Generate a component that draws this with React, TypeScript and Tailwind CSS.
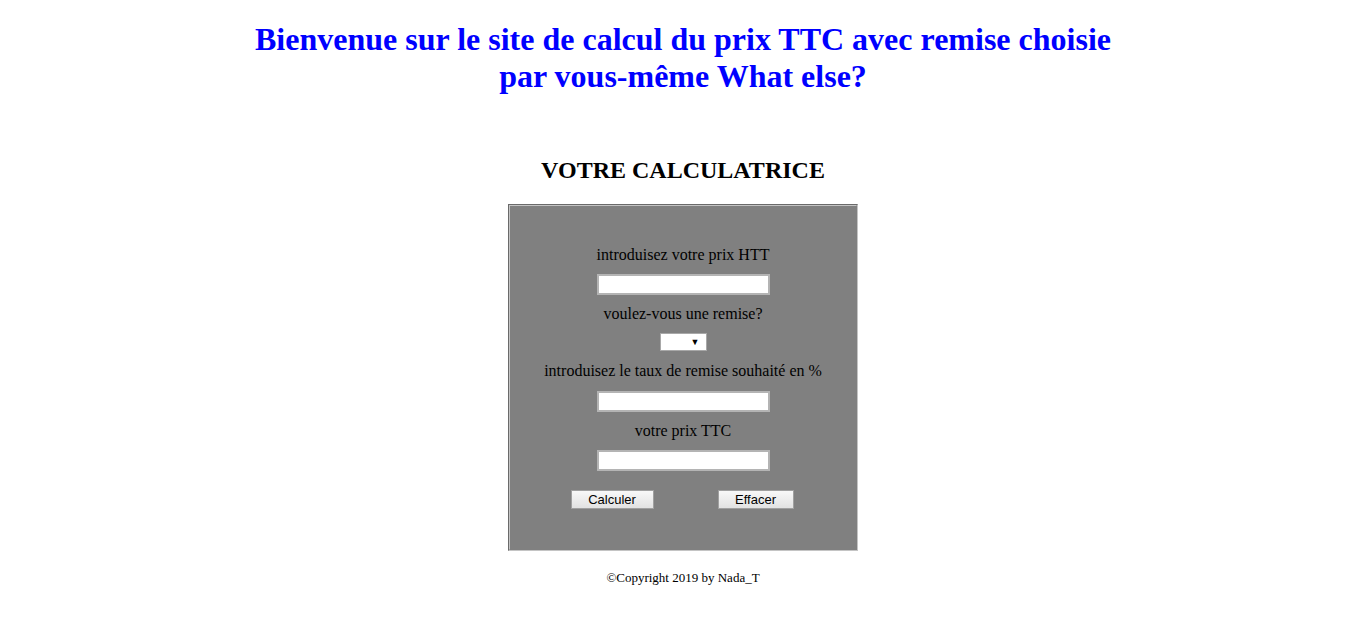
export default function App() {
  return (
    <main className="min-h-screen bg-white font-['Liberation_Serif','Times_New_Roman',serif] text-black">
      <h1 className="mx-auto max-w-[870px] pt-[21px] text-center text-[32px] font-bold leading-[37px] text-[#0000ff]">
        Bienvenue sur le site de calcul du prix TTC avec remise choisie par vous-même What else?
      </h1>

      <h2 className="mt-[61px] text-center text-[24px] font-bold leading-[28px]">
        VOTRE CALCULATRICE
      </h2>

      <div className="mx-auto mt-[20px] w-[350px] border border-t-[#6a6a6a] border-l-[#6a6a6a] border-r-[#c4c4c4] border-b-[#c4c4c4]">
        <div className="flex flex-col items-center border border-t-[#c4c4c4] border-l-[#c4c4c4] border-r-[#808080] border-b-[#808080] bg-[#808080] pt-[40px] pb-[40px] text-[16px] leading-[18px]">
          <label>introduisez votre prix HTT</label>
          <input type="text" className="mt-[10px] h-[21px] w-[173px] border-2 border-[#b4b4b4] bg-white" />

          <label className="mt-[10px]">voulez-vous une remise?</label>
          <div className="mt-[10px] flex h-[18px] w-[47px] items-center justify-end border border-[#a8a8a8] bg-white pr-[6px]">
            <span className="text-[9px] leading-none">▼</span>
          </div>

          <label className="mt-[11px]">introduisez le taux de remise souhaité en %</label>
          <input type="text" className="mt-[11px] h-[21px] w-[173px] border-2 border-[#b4b4b4] bg-white" />

          <label className="mt-[10px]">votre prix TTC</label>
          <input type="text" className="mt-[10px] h-[21px] w-[173px] border-2 border-[#b4b4b4] bg-white" />

          <div className="mt-[19px] flex gap-[64px] pr-[2px]">
            <button className="h-[19px] w-[83px] border border-[#a0a0a0] bg-gradient-to-b from-[#f8f8f8] to-[#e2e2e2] font-['Liberation_Sans',Arial,sans-serif] text-[13px] leading-none">
              Calculer
            </button>
            <button className="h-[19px] w-[76px] border border-[#a0a0a0] bg-gradient-to-b from-[#f8f8f8] to-[#e2e2e2] font-['Liberation_Sans',Arial,sans-serif] text-[13px] leading-none">
              Effacer
            </button>
          </div>
        </div>
      </div>

      <p className="mt-[19px] text-center text-[13px] leading-[15px]">©Copyright 2019 by Nada_T</p>
    </main>
  );
}
